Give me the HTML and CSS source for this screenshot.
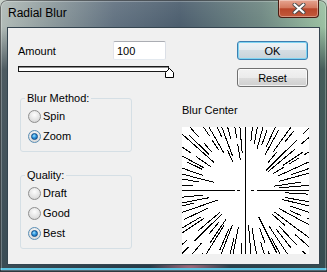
FILE: index.html
```html
<!DOCTYPE html>
<html lang="en">
<head>
    <meta charset="UTF-8">
    <meta name="viewport" content="width=device-width, initial-scale=1.0">
    <title>Radial Blur</title>
    <link rel="stylesheet" href="styles.css">
</head>
<body>
    <div class="window">
        <div class="titlebar">
            <span class="title">Radial Blur</span>
            <div class="close">
                <svg width="14" height="11" viewBox="0 0 14 11">
                    <path d="M2.5 1.5 L11.5 9.5 M11.5 1.5 L2.5 9.5" stroke="#4a4a4a" stroke-width="4" stroke-linecap="round" fill="none"/>
                    <path d="M2.5 1.5 L11.5 9.5 M11.5 1.5 L2.5 9.5" stroke="#fff" stroke-width="2.2" stroke-linecap="round" fill="none"/>
                </svg>
            </div>
        </div>
        <div class="client">
            <div class="left-col">
                <div class="amount-row">
                    <label for="amount">Amount</label>
                    <input type="text" id="amount" value="100">
                </div>
                <div class="slider">
                    <div class="track"></div>
                    <svg class="thumb" width="9" height="10" viewBox="0 0 9 10">
                        <path d="M0.5 9.5 L0.5 4.5 L4.5 0.5 L8.5 4.5 L8.5 9.5 Z" fill="#fff" stroke="#000"/>
                    </svg>
                </div>
                <div class="group method">
                    <div class="group-title">Blur Method:</div>
                    <div class="option"><span class="radio"></span>Spin</div>
                    <div class="option"><span class="radio checked"></span>Zoom</div>
                </div>
                <div class="group quality">
                    <div class="group-title">Quality:</div>
                    <div class="option"><span class="radio"></span>Draft</div>
                    <div class="option"><span class="radio"></span>Good</div>
                    <div class="option"><span class="radio checked"></span>Best</div>
                </div>
            </div>
            <div class="right-col">
                <div class="buttons">
                    <button class="btn default">OK</button>
                    <button class="btn">Reset</button>
                </div>
                <div class="center-label">Blur Center</div>
                <svg id="rays" class="preview" width="127" height="127" viewBox="0 0 127 127"></svg>
            </div>
        </div>
    </div>

    <script>
        // zoom blur preview: dashed rays out from the centre
        const svg = document.getElementById('rays');
        const cx = 63.5, cy = 63.5;
        let seed = 11;
        function rand() {
            seed = (seed * 16807) % 2147483647;
            return (seed - 1) / 2147483646;
        }
        function seg(a, r1, r2) {
            const c = Math.cos(a), s = Math.sin(a);
            return `<line x1="${(cx + c * r1).toFixed(1)}" y1="${(cy + s * r1).toFixed(1)}" x2="${(cx + c * r2).toFixed(1)}" y2="${(cy + s * r2).toFixed(1)}"/>`;
        }
        let out = '';
        const count = 72;
        for (let i = 0; i < count; i++) {
            if (i % 18 === 0) continue;
            const a = (i / count) * Math.PI * 2 + (rand() - 0.5) * 0.06;
            let r = 28 + rand() * 26;
            while (r < 96) {
                const r2 = Math.min(r + 12 + rand() * 34, 96);
                out += seg(a, r, r2);
                r = r2 + 5 + rand() * 10;
            }
        }
        // axes
        out += '<line x1="0" y1="63.5" x2="53" y2="63.5"/>';
        out += '<line x1="55" y1="63.5" x2="58" y2="63.5"/>';
        out += '<line x1="69" y1="63.5" x2="72" y2="63.5"/>';
        out += '<line x1="75" y1="63.5" x2="127" y2="63.5"/>';
        out += '<line x1="63.5" y1="0" x2="63.5" y2="127"/>';
        svg.innerHTML = out;
    </script>
</body>
</html>
```

FILE: styles.css
```css
body {
    margin: 0;
    background-color: #c9d2cb;
    font-family: "Liberation Sans", Arial, sans-serif;
    font-size: 11px;
    color: #000;
}
.window {
    width: 327px;
    height: 272px;
    box-sizing: border-box;
    padding: 0 7px 7px 7px;
    border-radius: 7px 7px 0 0;
    display: flex;
    flex-direction: column;
    background:
        linear-gradient(180deg, transparent 268px, #5cc4e2 268px, #5cc4e2 270px, #1f3545 270px),
        radial-gradient(40px 8px at 190px 267px, rgba(200, 120, 140, 0.75), transparent),
        linear-gradient(180deg, rgba(255, 255, 255, 0.08) 0, transparent 27px, rgba(25, 40, 52, 0.65) 70px, rgba(28, 48, 60, 0.8) 100%),
        linear-gradient(90deg, #b2bcb8 0%, #8e9b9d 15%, #617180 35%, #4c5e6e 55%, #6e8782 80%, #9cc2a3 100%);
    box-shadow: inset 0 0 0 1px rgba(0, 0, 0, 0.45), inset 0 0 0 2px rgba(255, 255, 255, 0.25);
}
.titlebar {
    height: 27px;
    display: flex;
    justify-content: space-between;
    align-items: flex-start;
}
.title {
    font-size: 12px;
    padding-top: 6px;
    padding-left: 1px;
    color: #000;
}
.close {
    width: 41px;
    height: 18px;
    margin-right: 1px;
    box-sizing: border-box;
    border: 1px solid #4b1c12;
    border-top: none;
    border-radius: 0 0 4px 4px;
    background: linear-gradient(180deg, #e6a592 0%, #d47a60 45%, #b8452a 52%, #c25a3c 100%);
    box-shadow: inset 0 0 0 1px rgba(255, 255, 255, 0.35);
    display: flex;
    align-items: center;
    justify-content: center;
}
.client {
    flex: 1;
    display: flex;
    gap: 10px;
    padding: 13px 10px 0 10px;
    background-color: #f0f0f0;
    border: 1px solid #34444f;
}
.left-col {
    width: 154px;
    display: flex;
    flex-direction: column;
}
.amount-row {
    width: 148px;
    height: 19px;
    display: flex;
    justify-content: space-between;
    align-items: center;
}
.amount-row input {
    width: 53px;
    height: 19px;
    box-sizing: border-box;
    padding: 0 3px;
    border: 1px solid #abadb3;
    border-color: #abadb3 #dbdfe6 #e3e9ef #e2e3ea;
    border-radius: 2px;
    font-family: inherit;
    font-size: 11px;
    color: #000;
    background: #fff;
}
.slider {
    position: relative;
    height: 11px;
    margin-top: 6px;
}
.track {
    width: 151px;
    height: 6px;
    box-sizing: border-box;
    border: 1px solid #1a1a1a;
    box-shadow: inset 0 1px #8a8a8a;
    background: #fff;
}
.thumb {
    position: absolute;
    left: 147px;
    top: 2px;
}
.group {
    display: flex;
    flex-direction: column;
    width: 112px;
    box-sizing: border-box;
    margin-left: 2px;
    padding-bottom: 5px;
    border: 1px solid #d5dfe5;
    border-radius: 3px;
}
.method {
    margin-top: 21px;
}
.quality {
    margin-top: 23px;
}
.group-title {
    align-self: flex-start;
    margin-top: -7px;
    margin-left: 4px;
    margin-bottom: 1px;
    padding: 0 2px;
    line-height: 13px;
    background-color: #f0f0f0;
}
.option {
    height: 20px;
    display: flex;
    align-items: center;
    gap: 2px;
    padding-left: 7px;
}
.radio {
    position: relative;
    width: 13px;
    height: 13px;
    box-sizing: border-box;
    border-radius: 50%;
    border: 1px solid #8f8f8f;
    background: radial-gradient(circle at 50% 35%, #fdfdfd 0%, #e2e2e2 60%, #cbcbcb 100%);
}
.radio.checked {
    border-color: #5b8fb5;
}
.radio.checked::after {
    content: "";
    position: absolute;
    left: 2px;
    top: 2px;
    width: 7px;
    height: 7px;
    box-sizing: border-box;
    border-radius: 50%;
    border: 1px solid #0d4a86;
    background: radial-gradient(circle at 40% 35%, #a6e4ff 0%, #2e95dc 45%, #0f5ea8 100%);
}
.right-col {
    width: 127px;
    display: flex;
    flex-direction: column;
}
.buttons {
    display: flex;
    flex-direction: column;
    align-items: flex-end;
    gap: 8px;
    padding-right: 1px;
}
.btn {
    width: 71px;
    height: 19px;
    padding: 0;
    border: 1px solid #707070;
    border-radius: 3px;
    background: linear-gradient(180deg, #f2f2f2 0%, #ebebeb 50%, #dddddd 50%, #cfcfcf 100%);
    box-shadow: inset 0 0 0 1px rgba(255, 255, 255, 0.7);
    font-family: "Liberation Sans", Arial, sans-serif;
    font-size: 11px;
    color: #000;
}
.btn.default {
    border-color: #3c7fb1;
    box-shadow: inset 0 0 0 1px #7fd4f2;
    background: linear-gradient(180deg, #eef3f6 0%, #e4ebef 50%, #d4dde3 50%, #c8d3da 100%);
}
.center-label {
    margin-top: 17px;
    line-height: 13px;
}
.preview {
    margin-top: 10px;
    background: #fff;
    stroke: #000;
    stroke-width: 1;
    shape-rendering: crispEdges;
}
```
